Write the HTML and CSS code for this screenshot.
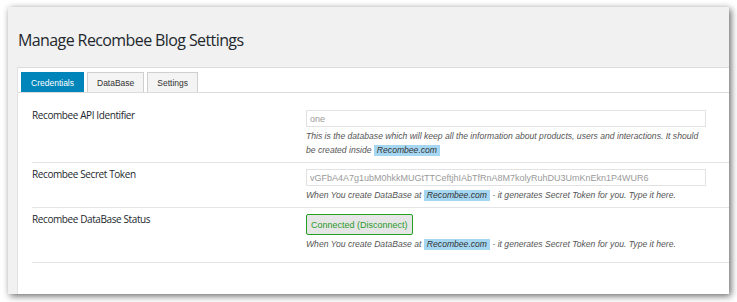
FILE: index.html
```html
<html>
	<head>
		<link rel="stylesheet" href="styles.css">
	</head>
	<body>
		<div class="window">
			<h1 class="page-title">Manage Recombee Blog Settings</h1>
			<div class="panel">
				<div class="tabs">
					<span class="tab active">Credentials</span>
					<span class="tab">DataBase</span>
					<span class="tab">Settings</span>
				</div>
				<div class="form">
					<div class="row first">
						<div class="label">Recombee API Identifier</div>
						<div class="field">
							<input class="text-input" type="text" value="one">
							<p class="desc">This is the database which will keep all the information about products, users and interactions. It should be created inside <span class="mark">Recombee.com</span></p>
						</div>
					</div>
					<div class="row">
						<div class="label">Recombee Secret Token</div>
						<div class="field">
							<input class="text-input" type="text" value="vGFbA4A7g1ubM0hkkMUGtTTCeftjhIAbTfRnA8M7kolyRuhDU3UmKnEkn1P4WUR6">
							<p class="desc">When You create DataBase at <span class="mark">Recombee.com</span> - it generates Secret Token for you. Type it here.</p>
						</div>
					</div>
					<div class="row last">
						<div class="label">Recombee DataBase Status</div>
						<div class="field">
							<button class="status-btn">Connected (Disconnect)</button>
							<p class="desc">When You create DataBase at <span class="mark">Recombee.com</span> - it generates Secret Token for you. Type it here.</p>
						</div>
					</div>
				</div>
			</div>
		</div>
	</body>
</html>
```

FILE: styles.css
```css
body {
	margin: 0;
	background-color: #ffffff;
	font-family: "Liberation Sans", Arial, sans-serif;
	color: #23282d;
}

.window {
	margin: 7px 8px;
	width: 721px;
	height: 287px;
	background-color: #f1f1f1;
	overflow: hidden;
	box-shadow: 2px 2px 7px rgba(0, 0, 0, 0.6);
	display: flex;
	flex-direction: column;
}

.page-title {
	margin: 0;
	padding: 22px 0 0 10px;
	height: 38px;
	font-family: "Open Sans", sans-serif;
	font-weight: 400;
	font-size: 16px;
	letter-spacing: -0.6px;
	line-height: 22px;
	color: #23282d;
}

.panel {
	flex: 1;
	margin-left: 9px;
	width: 760px;
	background-color: #fff;
	border-top: 1px solid #dcdcdc;
	border-left: 1px solid #e2e2e2;
}

.tabs {
	display: flex;
	gap: 3px;
	padding: 4px 0 0 3px;
	border-bottom: 1px solid #dcdcdc;
}

.tab {
	height: 19px;
	padding: 0 9px;
	display: flex;
	align-items: center;
	font-size: 8.5px;
	color: #333;
	background-color: #f4f4f4;
	border: 1px solid #cfcfcf;
	border-bottom: none;
}

.tab.active {
	background-color: #0085ba;
	border-color: #0085ba;
	color: #fff;
}

.form {
	padding: 11px 0 0 14px;
}

.row {
	display: flex;
	padding: 6px 0 5px 0;
	border-bottom: 1px solid #e4e4e4;
}

.row.last {
	padding-bottom: 11px;
}

.label {
	width: 274px;
	margin-top: -2px;
	font-family: "Open Sans", sans-serif;
	font-size: 10px;
	letter-spacing: -0.4px;
	line-height: 14px;
	color: #23282d;
}

.field {
	width: 400px;
}

.text-input {
	display: block;
	box-sizing: border-box;
	width: 400px;
	height: 17px;
	margin: 0;
	padding: 0 3px;
	border: 1px solid #e2e2e2;
	font-family: "Liberation Sans", Arial, sans-serif;
	font-size: 9px;
	color: #9a9a9a;
	outline: none;
}

.desc {
	margin: 2px 0 0 0;
	font-style: italic;
	font-size: 8.6px;
	line-height: 14px;
	color: #555;
}

.mark {
	display: inline-block;
	line-height: 11px;
	background-color: #a6d7f2;
	padding: 0 3px;
	color: #333;
}

.status-btn {
	display: block;
	height: 21px;
	margin: 0;
	padding: 0 4px;
	background-color: #e6e6e6;
	border: 1px solid #22a022;
	border-radius: 2px;
	color: #2a9a2a;
	font-family: "Liberation Sans", Arial, sans-serif;
	font-size: 9px;
}
```
